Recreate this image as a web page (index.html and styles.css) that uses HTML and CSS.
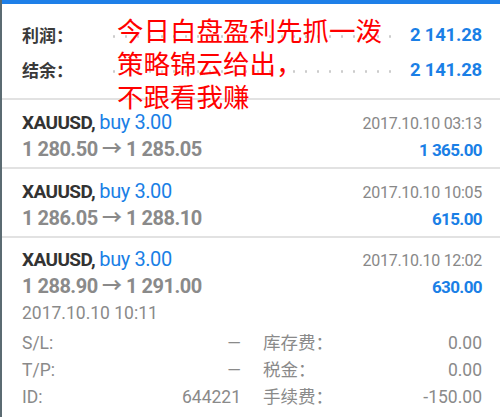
FILE: index.html
```html
<!DOCTYPE html>
<html>
<head>
<meta charset="utf-8">
<title>交易历史</title>
<link rel="stylesheet" href="styles.css">
</head>
<body>
	<section class="screen">
		<div class="topbar"></div>

		<div class="summary">
			<div class="sum_row">
				<span class="sum_label">利润：</span>
				<span class="dots"></span>
				<span class="sum_value">2 141.28</span>
			</div>
			<div class="sum_row">
				<span class="sum_label">结余：</span>
				<span class="dots"></span>
				<span class="sum_value">2 141.28</span>
			</div>
			<div class="note">今日白盘盈利先抓一泼<br>策略锦云给出，<br>不跟看我赚</div>
		</div>

		<div class="deal">
			<div class="deal_line">
				<span class="sym">XAUUSD, <em>buy 3.00</em></span>
				<span class="time">2017.10.10 03:13</span>
			</div>
			<div class="deal_line">
				<span class="price">1 280.50 → 1 285.05</span>
				<span class="profit">1 365.00</span>
			</div>
		</div>

		<div class="deal">
			<div class="deal_line">
				<span class="sym">XAUUSD, <em>buy 3.00</em></span>
				<span class="time">2017.10.10 10:05</span>
			</div>
			<div class="deal_line">
				<span class="price">1 286.05 → 1 288.10</span>
				<span class="profit">615.00</span>
			</div>
		</div>

		<div class="deal open">
			<div class="deal_line">
				<span class="sym">XAUUSD, <em>buy 3.00</em></span>
				<span class="time">2017.10.10 12:02</span>
			</div>
			<div class="deal_line">
				<span class="price">1 288.90 → 1 291.00</span>
				<span class="profit">630.00</span>
			</div>
			<div class="open_time">2017.10.10 10:11</div>
			<div class="details">
				<div class="det_col">
					<div class="det_row"><span>S/L:</span><span>—</span></div>
					<div class="det_row"><span>T/P:</span><span>—</span></div>
					<div class="det_row"><span>ID:</span><span>644221</span></div>
				</div>
				<div class="det_col">
					<div class="det_row"><span>库存费：</span><span>0.00</span></div>
					<div class="det_row"><span>税金：</span><span>0.00</span></div>
					<div class="det_row"><span>手续费：</span><span>-150.00</span></div>
				</div>
			</div>
		</div>
	</section>
</body>
</html>
```

FILE: styles.css
```css
body{ margin: 0; background: #fff; font-family: Roboto, "Noto Sans CJK SC", sans-serif;}

.screen{ width: 498px; height: 417px; overflow: hidden; border-left: 2px solid #5b6b72; background: #fff;}
.topbar{ height: 4px; background: #1e7fe8;}

.summary{ position: relative; padding: 13px 18px 11px 20px; border-bottom: 2px solid #e2e2e2;}
.sum_row{ display: flex; align-items: center; height: 35px;}
.sum_label{ font-size: 17px; font-weight: bold; color: #3a3a3a; width: 86px;}
.dots{ flex: 1; height: 3px; margin: 4px 12px 0 0; background: radial-gradient(circle, #ccc 1px, transparent 1.5px) 0 0 / 12px 3px repeat-x;}
.sum_value{ font-size: 18.5px; font-weight: bold; color: #1a7fe6; letter-spacing: -0.2px;}
.note{ position: absolute; left: 115px; top: 9px; font-family: "Noto Sans CJK SC", sans-serif; font-size: 26.5px; line-height: 33px; color: #f00;}

.deal{ padding: 10px 18px 11px 20px; border-bottom: 2px solid #e2e2e2;}
.deal_line{ display: flex; justify-content: space-between; align-items: baseline; height: 23px;}
.sym{ font-size: 19px; font-weight: bold; color: #333; letter-spacing: -0.6px;}
.sym em{ font-style: normal; font-weight: normal; color: #1a7fe6; font-size: 20px; letter-spacing: -0.4px;}
.time{ font-size: 16px; color: #888; letter-spacing: -0.3px;}
.price{ font-size: 20px; font-weight: bold; color: #8a8a8a; letter-spacing: -0.5px;}
.profit{ font-size: 17px; font-weight: bold; color: #1a7fe6; letter-spacing: -0.6px;}

.open{ padding-top: 9px; border-bottom: none;}
.open_time{ font-size: 17.5px; color: #8a8a8a; margin-top: 10px; height: 24px;}
.details{ display: flex; gap: 22px; margin-top: 3px;}
.det_col{ flex: 1;}
.det_row{ display: flex; justify-content: space-between; height: 27px; line-height: 27px; font-size: 17.5px; color: #8a8a8a;}
```
